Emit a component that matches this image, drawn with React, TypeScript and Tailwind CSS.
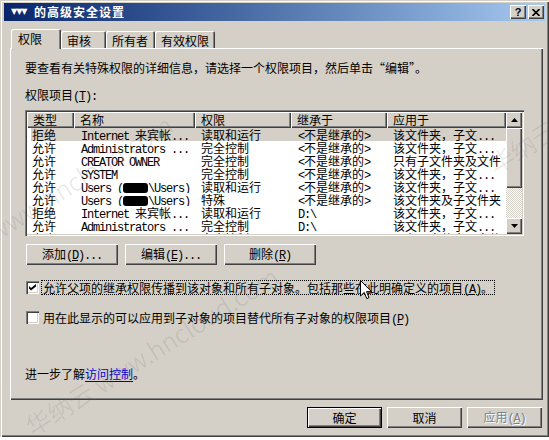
import React from "react";

const raised =
  "shadow-[inset_1px_1px_0_#fff,inset_-1px_-1px_0_#404040,inset_-2px_-2px_0_#808080]";
const sunken =
  "shadow-[inset_1px_1px_0_#808080,inset_2px_2px_0_#404040,inset_-1px_-1px_0_#fff,inset_-2px_-2px_0_#d4d0c8]";
const mono = "font-['Liberation_Mono',monospace] text-[12px] tracking-[-1.2px]";

// ascii runs get a narrow mono face (like SimSun half-width); "&x" underlines x, "#" is the scribble
const Txt = ({ s }: { s: string }) => {
  const parts: React.ReactNode[] = [];
  let i = 0;
  let k = 0;
  while (i < s.length) {
    const c = s[i];
    if (c === "&") {
      parts.push(
        <span key={k++} className={`${mono} underline underline-offset-1`}>
          {s[i + 1]}
        </span>
      );
      i += 2;
      continue;
    }
    if (c === "#") {
      parts.push(
        <span key={k++} className="inline-block w-[25px] h-[10px] bg-black rounded-[3px] align-[-1px]" />
      );
      i += 1;
      continue;
    }
    const ascii = c.charCodeAt(0) < 128;
    let j = i;
    while (j < s.length && s[j] !== "&" && s[j] !== "#" && (s.charCodeAt(j) < 128) === ascii) j++;
    const run = s.slice(i, j);
    parts.push(
      ascii ? (
        <span key={k++} className={mono}>
          {run}
        </span>
      ) : (
        <span key={k++}>{run}</span>
      )
    );
    i = j;
  }
  return <>{parts}</>;
};

const columns = [
  { title: "类型", w: "w-[47px]" },
  { title: "名称", w: "w-[121px]" },
  { title: "权限", w: "w-[96px]" },
  { title: "继承于", w: "w-[96px]" },
  { title: "应用于", w: "w-[119px]" },
];

const rows = [
  ["拒绝", "Internet 来宾帐...", "读取和运行", "<不是继承的>", "该文件夹，子文..."],
  ["允许", "Administrators ...", "完全控制", "<不是继承的>", "该文件夹，子文..."],
  ["允许", "CREATOR OWNER", "完全控制", "<不是继承的>", "只有子文件夹及文件"],
  ["允许", "SYSTEM", "完全控制", "<不是继承的>", "该文件夹，子文..."],
  ["允许", "Users (#\\Users)", "读取和运行", "<不是继承的>", "该文件夹，子文..."],
  ["允许", "Users (#\\Users)", "特殊", "<不是继承的>", "该文件夹及子文件夹"],
  ["拒绝", "Internet 来宾帐...", "读取和运行", "D:\\", "该文件夹，子文..."],
  ["允许", "Administrators ...", "完全控制", "D:\\", "该文件夹，子文..."],
  ["允许", "CREATOR OWNER", "完全控制", "D:\\", "只有子文件夹及文件"],
];

const Arrow = ({ up }: { up?: boolean }) => (
  <svg width="7" height="4" viewBox="0 0 7 4">
    <path d={up ? "M3.5 0 L7 4 L0 4 Z" : "M0 0 L7 0 L3.5 4 Z"} fill="#000" />
  </svg>
);

const Checkbox = ({ checked }: { checked?: boolean }) => (
  <div className={`w-[13px] h-[13px] bg-white ${sunken} flex items-center justify-center`}>
    {checked && (
      <svg width="7" height="7" viewBox="0 0 7 7">
        <path d="M0 2 L2 4 L7 0 L7 2.5 L2 6.5 L0 4.5 Z" fill="#000" />
      </svg>
    )}
  </div>
);

const Watermark = ({ className }: { className: string }) => (
  <div
    className={`absolute whitespace-nowrap leading-none text-[25px] font-light text-[rgba(90,90,90,0.17)] origin-bottom-left -rotate-[32deg] pointer-events-none ${className}`}
  >
    华纳云 www.hncloud.com
  </div>
);

export default function App() {
  return (
    <div className="relative w-[549px] h-[440px] overflow-hidden bg-white font-['Noto_Sans_CJK_SC',sans-serif] text-[12px] text-black">
      <div className="flex flex-col w-[549px] h-[437px] bg-[#d4d0c8] pt-[3px] px-[4px] shadow-[inset_1px_1px_0_#d4d0c8,inset_2px_2px_0_#fff,inset_-1px_-1px_0_#404040,inset_-2px_-2px_0_#808080]">
        {/* title bar */}
        <div className="flex items-center h-[18px] bg-linear-to-r from-[#0a246a] to-[#a6caf0] pl-[7px] pr-[1px]">
          <span className="w-[20px] text-white font-bold text-[8px] leading-none font-['DejaVu_Sans',sans-serif] tracking-[-1px]">
            ▼▼▼
          </span>
          <span className="ml-[3px] text-white font-bold text-[12px] leading-[14px] tracking-[1px]">
            的高级安全设置
          </span>
          <div className="ml-auto flex gap-[2px]">
            <div className={`w-[16px] h-[14px] bg-[#d4d0c8] ${raised} flex items-center justify-center`}>
              <span className="font-['Liberation_Sans',sans-serif] font-bold text-[11px] leading-none">?</span>
            </div>
            <div className={`w-[16px] h-[14px] bg-[#d4d0c8] ${raised} flex items-center justify-center`}>
              <svg width="8" height="7" viewBox="0 0 8 7">
                <path d="M0.5 0 L7.5 7 M7.5 0 L0.5 7" stroke="#000" strokeWidth="1.6" />
              </svg>
            </div>
          </div>
        </div>

        {/* tabs + panel */}
        <div className="mt-[8px] ml-[6px] mr-[2px] flex flex-col">
          <div className="relative z-10 -mb-[1px] flex items-end h-[20px] pl-[1px]">
            <div className="w-[50px] h-[20px] bg-[#d4d0c8] rounded-t-[2px] shadow-[inset_1px_1px_0_#fff,inset_-1px_0_0_#404040,inset_-2px_0_0_#808080] pl-[7px] pt-[3px] leading-[14px]">
              权限
            </div>
            {[
              ["审核", "w-[45px]"],
              ["所有者", "w-[49px]"],
              ["有效权限", "w-[60px]"],
            ].map(([t, w]) => (
              <div
                key={t}
                className={`${w} h-[17px] mb-[1px] bg-[#d4d0c8] rounded-t-[2px] shadow-[inset_1px_1px_0_#fff,inset_-1px_0_0_#404040,inset_-2px_0_0_#808080] pl-[6px] pt-[3px] leading-[14px]`}
              >
                {t}
              </div>
            ))}
          </div>

          <div className="h-[352px] bg-[#d4d0c8] shadow-[inset_1px_1px_0_#fff,inset_-1px_-1px_0_#404040,inset_-2px_-2px_0_#808080] pl-[15px] pt-[13px] flex flex-col items-start leading-[14px]">
            <div>要查看有关特殊权限的详细信息，请选择一个权限项目，然后单击“编辑”。</div>
            <div className="mt-[13px]">
              <Txt s="权限项目(&T):" />
            </div>

            {/* list view */}
            <div className={`mt-[6px] w-[499px] h-[126px] bg-white p-[2px] ${sunken} flex`}>
              <div className="w-[479px] h-[122px] overflow-hidden flex flex-col">
                <div className="flex h-[16px] shrink-0">
                  {columns.map((c) => (
                    <div
                      key={c.title}
                      className={`${c.w} h-[16px] bg-[#d4d0c8] ${raised} pl-[6px] leading-[16px]`}
                    >
                      {c.title}
                    </div>
                  ))}
                </div>
                {rows.map((r, ri) => (
                  <div key={ri} className="flex pl-[4px] h-[13px] shrink-0 leading-[13px] whitespace-pre">
                    <div className={`flex ${ri === 0 ? "bg-[#d4d0c8]" : ""}`}>
                      <div className="w-[43px] pl-[1px] overflow-hidden">{r[0]}</div>
                      <div className="w-[121px] pl-[7px] overflow-hidden">
                        <Txt s={r[1]} />
                      </div>
                      <div className="w-[96px] pl-[6px] overflow-hidden">{r[2]}</div>
                      <div className="w-[96px] pl-[7px] overflow-hidden">
                        <Txt s={r[3]} />
                      </div>
                      <div className="w-[119px] pl-[6px] overflow-hidden">
                        <Txt s={r[4]} />
                      </div>
                    </div>
                  </div>
                ))}
              </div>
              {/* scrollbar */}
              <div className="w-[16px] h-[122px] flex flex-col">
                <div className={`h-[16px] bg-[#d4d0c8] ${raised} flex items-center justify-center`}>
                  <Arrow up />
                </div>
                <div className={`h-[60px] bg-[#d4d0c8] ${raised}`} />
                <div className="flex-1 bg-[conic-gradient(#fff_25%,#d4d0c8_0_50%,#fff_0_75%,#d4d0c8_0)] bg-size-[2px_2px]" />
                <div className={`h-[16px] bg-[#d4d0c8] ${raised} flex items-center justify-center`}>
                  <Arrow />
                </div>
              </div>
            </div>

            <div className="mt-[8px] ml-[1px] flex gap-[7px]">
              {["添加(&D)...", "编辑(&E)...", "删除(&R)"].map((b) => (
                <div
                  key={b}
                  className={`w-[92px] h-[21px] bg-[#d4d0c8] ${raised} flex items-center justify-center leading-[14px]`}
                >
                  <span>
                    <Txt s={b} />
                  </span>
                </div>
              ))}
            </div>

            <div className="mt-[15px] ml-[1px] flex items-center h-[15px]">
              <Checkbox checked />
              <div className="ml-[2px] h-[15px] px-[1px] border border-dotted border-black leading-[13px]">
                <Txt s="允许父项的继承权限传播到该对象和所有子对象。包括那些在此明确定义的项目(&A)。" />
              </div>
            </div>

            <div className="mt-[15px] ml-[1px] flex items-center h-[15px]">
              <Checkbox />
              <div className="ml-[2px] h-[15px] px-[1px] border border-transparent leading-[13px]">
                <Txt s="用在此显示的可以应用到子对象的项目替代所有子对象的权限项目(&P)" />
              </div>
            </div>

            <div className="mt-[42px]">
              进一步了解<span className="text-[#0000cc] underline underline-offset-2">访问控制</span>。
            </div>
          </div>
        </div>

        {/* dialog buttons */}
        <div className="mt-[7px] flex justify-end gap-[5px] pr-[3px]">
          <div className="w-[75px] h-[21px] border border-black bg-[#d4d0c8] shadow-[inset_1px_1px_0_#fff,inset_-1px_-1px_0_#404040,inset_-2px_-2px_0_#808080] flex items-center justify-center">
            确定
          </div>
          <div className={`w-[75px] h-[21px] bg-[#d4d0c8] ${raised} flex items-center justify-center`}>
            取消
          </div>
          <div
            className={`w-[75px] h-[21px] bg-[#d4d0c8] ${raised} flex items-center justify-center text-[#808080] [text-shadow:1px_1px_0_#fff]`}
          >
            <span>
              <Txt s="应用(&A)" />
            </span>
          </div>
        </div>
      </div>

      {/* watermark overlay */}
      <Watermark className="left-[-72px] top-[262px]" />
      <Watermark className="left-[34px] top-[414px]" />
      <Watermark className="left-[497px] top-[152px]" />

      {/* mouse pointer */}
      <svg className="absolute left-[360px] top-[280px]" width="13" height="20" viewBox="0 0 13 20">
        <path
          d="M0.5 0.5 L0.5 16 L4.2 12.4 L6.8 18.6 L9 17.6 L6.5 11.6 L11.5 11.6 Z"
          fill="#fff"
          stroke="#000"
          strokeWidth="1"
        />
      </svg>
    </div>
  );
}
